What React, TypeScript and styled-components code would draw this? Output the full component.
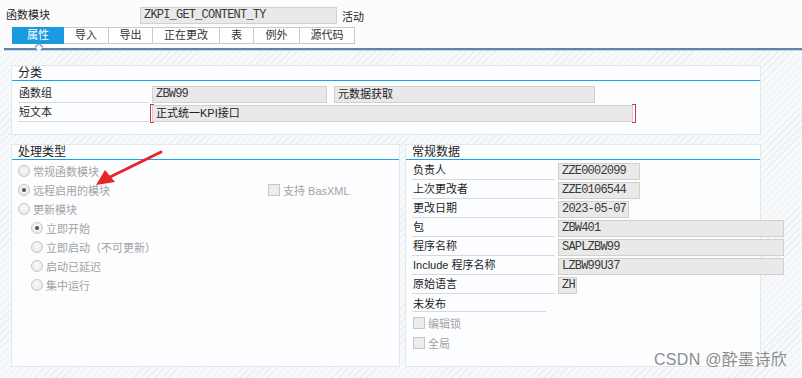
import * as React from 'react';
import styled, { createGlobalStyle } from 'styled-components';

const GlobalStyle = createGlobalStyle`
	html, body {
		margin: 0;
		padding: 0;
		background: #fcfcfc;
	}
	body {
		font-family: "Liberation Sans", "Noto Sans CJK SC", sans-serif;
		font-size: 11px;
		color: #1e1e1e;
	}
`;

const Page = styled.div`
	position: relative;
	width: 802px;
	height: 378px;
	overflow: hidden;
	display: flex;
	flex-direction: column;
	background: #fcfcfc;
`;

const Header = styled.div`
	display: flex;
	flex-direction: column;
	gap: 3px;
	padding: 7px 0 0 6px;
	height: 48px;
	box-sizing: border-box;
	flex: none;
`;

const TopRow = styled.div`
	display: flex;
	align-items: center;
	height: 17px;
`;

const TopLabel = styled.span`
	width: 134px;
	line-height: 17px;
`;

const Field = styled.div<{ w: number; red?: boolean }>`
	position: relative;
	box-sizing: border-box;
	width: ${({ w }) => w}px;
	height: 17px;
	flex: none;
	background: #e9e9e9;
	border: 1px solid #d0d0d0;
	padding: 0 3px;
	font-family: "Liberation Mono", "Noto Sans CJK SC", monospace;
	font-size: 12px;
	letter-spacing: -0.8px;
	line-height: 15px;
	color: #3a3a3a;
	white-space: nowrap;
	overflow: visible;

	${({ red }) =>
		red &&
		`
		&::before, &::after {
			content: '';
			position: absolute;
			top: -2px;
			bottom: -2px;
			width: 3px;
			border-top: 1px solid #d9363e;
			border-bottom: 1px solid #d9363e;
		}
		&::before { left: -3px; border-left: 1px solid #d9363e; }
		&::after { right: -4px; border-right: 1px solid #d9363e; }
	`}
`;

const SansValue = styled.span`
	font-family: "Liberation Sans", "Noto Sans CJK SC", sans-serif;
	font-size: 11px;
	letter-spacing: 0;
	color: #222;
`;

const Status = styled.span`
	margin-left: 5px;
`;

const TabStrip = styled.div`
	display: flex;
	margin-left: 6px;
	height: 17px;
`;

const Tab = styled.div<{ active?: boolean; w: number }>`
	position: relative;
	box-sizing: border-box;
	width: ${({ w }) => w}px;
	height: 17px;
	text-align: center;
	line-height: 15px;
	border: 1px solid ${({ active }) => (active ? '#1a9be0' : '#c9c9c9')};
	border-left-width: ${({ active }) => (active ? '1px' : '0')};
	background: ${({ active }) => (active ? '#1a9be0' : '#ffffff')};
	color: ${({ active }) => (active ? '#ffffff' : '#333')};
	${({ active }) =>
		active &&
		`
		&::after {
			content: '';
			position: absolute;
			left: 23px;
			bottom: -7px;
			width: 5px;
			height: 5px;
			background: #fcfcfc;
			border-left: 1px solid #5f84ad;
			border-top: 1px solid #5f84ad;
			transform: rotate(45deg);
		}
	`}
`;

const HeaderRule = styled.div`
	margin-left: 4px;
	height: 2px;
	flex: none;
	background: #5f84ad;
	border-bottom: 1px solid #c6d4e4;
`;

const Body = styled.div`
	flex: 1;
	display: flex;
	flex-direction: column;
	gap: 9px;
	padding: 14px 0 0 11px;
	background-color: #f7f9fb;
	background-image: repeating-linear-gradient(
		135deg,
		rgba(210, 220, 232, 0.35) 0 1px,
		transparent 1px 5px
	);
`;

const Panel = styled.div<{ w: number; h: number }>`
	box-sizing: border-box;
	width: ${({ w }) => w}px;
	height: ${({ h }) => h}px;
	background: #fcfdfe;
	border: 1px solid #e4e7eb;
	padding: 0 6px;
	display: flex;
	flex-direction: column;
`;

const PanelTitle = styled.div`
	font-size: 12px;
	line-height: 13px;
	padding: 1px 0 0 6px;
	height: 13px;
	border-bottom: 1px solid #1aa3e8;
	margin: 0 -6px;
`;

const PanelRow = styled.div`
	display: flex;
	gap: 5px;
	align-items: flex-start;
`;

const FieldRows = styled.div<{ top: number }>`
	display: flex;
	flex-direction: column;
	gap: 1px;
	padding-top: ${({ top }) => top}px;
`;

const FormRow = styled.div`
	display: flex;
	align-items: center;
	height: 18px;
`;

const Label = styled.span<{ w: number }>`
	box-sizing: border-box;
	width: ${({ w }) => w}px;
	height: 18px;
	line-height: 17px;
	flex: none;
	border-bottom: 1px solid #d6d9dd;
	padding-left: 1px;
	margin-right: 3px;
`;

const Options = styled.div`
	display: flex;
	flex-direction: column;
	padding-top: 1px;
`;

const OptionRow = styled.div<{ indent?: boolean }>`
	display: flex;
	align-items: center;
	height: 19.1px;
	padding-left: ${({ indent }) => (indent ? '13px' : '0')};
	color: #a3a3a3;
`;

const OptionText = styled.span<{ w?: number }>`
	margin-left: 3px;
	width: ${({ w }) => (w ? `${w}px` : 'auto')};
`;

const Radio = styled.span<{ checked?: boolean }>`
	box-sizing: border-box;
	width: 12px;
	height: 12px;
	border-radius: 50%;
	border: 1px solid #c6c6c6;
	background: radial-gradient(circle at 50% 40%, #fafafa, #e4e4e4);
	display: inline-flex;
	align-items: center;
	justify-content: center;
	flex: none;
	&::after {
		content: '';
		width: 4px;
		height: 4px;
		border-radius: 50%;
		background: ${({ checked }) => (checked ? '#555' : 'transparent')};
	}
`;

const Check = styled.span`
	box-sizing: border-box;
	width: 12px;
	height: 12px;
	border: 1px solid #c6c6c6;
	background: #ececec;
	flex: none;
`;

const Plain = styled.div`
	display: flex;
	align-items: center;
	height: 16px;
	margin-top: 1px;
	width: 133px;
	border-bottom: 1px solid #d6d9dd;
	padding-left: 1px;
`;

const CheckRow = styled.div<{ top?: number }>`
	display: flex;
	align-items: center;
	height: 20px;
	margin-top: ${({ top }) => top ?? 0}px;
	color: #a3a3a3;
	padding-left: 1px;
`;

const Watermark = styled.div`
	position: absolute;
	right: 15px;
	bottom: 9px;
	font-family: "Liberation Sans", "Noto Sans CJK SC", sans-serif;
	font-size: 16px;
	line-height: 18px;
	color: #8c8c8c;
	letter-spacing: 0.3px;
`;

const ArrowLayer = styled.svg`
	position: absolute;
	left: 0;
	top: 0;
	pointer-events: none;
`;

const tabs: [string, number][] = [
	['属性', 52],
	['导入', 45],
	['导出', 44],
	['正在更改', 67],
	['表', 34],
	['例外', 46],
	['源代码', 55],
];

const general: [string, string, number][] = [
	['负责人', 'ZZE0002099', 82],
	['上次更改者', 'ZZE0106544', 82],
	['更改日期', '2023-05-07', 71],
	['包', 'ZBW401', 226],
	['程序名称', 'SAPLZBW99', 226],
	['Include 程序名称', 'LZBW99U37', 226],
	['原始语言', 'ZH', 19],
];

const App = () => {
	return (
		<>
			<GlobalStyle />
			<Page>
				<Header>
					<TopRow>
						<TopLabel>函数模块</TopLabel>
						<Field w={197}>ZKPI_GET_CONTENT_TY</Field>
						<Status>活动</Status>
					</TopRow>
					<TabStrip>
						{tabs.map(([t, w], i) => (
							<Tab key={t} w={w} active={i === 0}>
								{t}
							</Tab>
						))}
					</TabStrip>
				</Header>
				<HeaderRule />
				<Body>
					<Panel w={750} h={70}>
						<PanelTitle>分类</PanelTitle>
						<FieldRows top={4}>
							<FormRow>
								<Label w={131}>函数组</Label>
								<Field w={175}>ZBW99</Field>
								<Field w={261} style={{ marginLeft: 7 }}>
									<SansValue>元数据获取</SansValue>
								</Field>
							</FormRow>
							<FormRow>
								<Label w={131}>短文本</Label>
								<Field w={481} red>
									<SansValue>正式统一KPI接口</SansValue>
								</Field>
							</FormRow>
						</FieldRows>
					</Panel>
					<PanelRow>
						<Panel w={389} h={223}>
							<PanelTitle>处理类型</PanelTitle>
							<Options>
								<OptionRow>
									<Radio />
									<OptionText>常规函数模块</OptionText>
								</OptionRow>
								<OptionRow>
									<Radio checked />
									<OptionText w={235}>远程启用的模块</OptionText>
									<Check />
									<OptionText>支持 BasXML</OptionText>
								</OptionRow>
								<OptionRow>
									<Radio />
									<OptionText>更新模块</OptionText>
								</OptionRow>
								<OptionRow indent>
									<Radio checked />
									<OptionText>立即开始</OptionText>
								</OptionRow>
								<OptionRow indent>
									<Radio />
									<OptionText>立即启动（不可更新）</OptionText>
								</OptionRow>
								<OptionRow indent>
									<Radio />
									<OptionText>启动已延迟</OptionText>
								</OptionRow>
								<OptionRow indent>
									<Radio />
									<OptionText>集中运行</OptionText>
								</OptionRow>
							</Options>
						</Panel>
						<Panel w={356} h={223}>
							<PanelTitle>常规数据</PanelTitle>
							<FieldRows top={2}>
								{general.map(([l, v, w]) => (
									<FormRow key={l}>
										<Label w={143}>{l}</Label>
										<Field w={w}>{v}</Field>
									</FormRow>
								))}
							</FieldRows>
							<Plain>未发布</Plain>
							<CheckRow top={1}>
								<Check />
								<OptionText>编辑锁</OptionText>
							</CheckRow>
							<CheckRow>
								<Check />
								<OptionText>全局</OptionText>
							</CheckRow>
						</Panel>
					</PanelRow>
				</Body>
				<Watermark>CSDN @酔墨诗欣</Watermark>
				<ArrowLayer width="802" height="378" viewBox="0 0 802 378">
					<line x1="161" y1="152" x2="110" y2="177" stroke="#e5262b" strokeWidth="3" strokeLinecap="round" />
					<polygon points="96,185 105,170 115,182" fill="#e5262b" />
				</ArrowLayer>
			</Page>
		</>
	);
};

export default App;
